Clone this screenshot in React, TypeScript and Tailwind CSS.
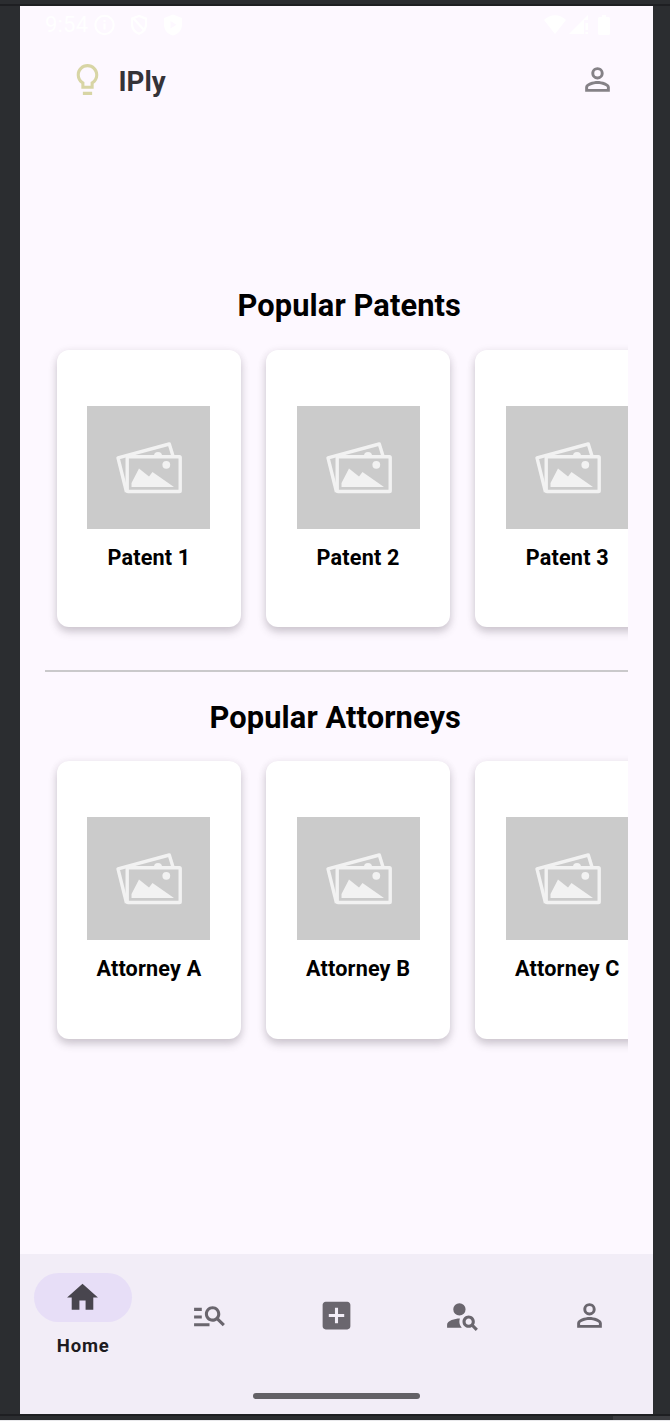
import React from "react";

const icons = {
  bulb: "M9 20h6v2H9zM12 2C8.14 2 5 5.14 5 9c0 2.38 1.19 4.47 3 5.74V18h8v-3.26c1.81-1.27 3-3.36 3-5.74 0-3.86-3.14-7-7-7zm2.85 11.1l-.85.6V16h-4v-2.3l-.85-.6C7.8 12.16 7 10.63 7 9c0-2.76 2.24-5 5-5s5 2.24 5 5c0 1.63-.8 3.16-2.15 4.1z",
  person:
    "M12 5.9a2.1 2.1 0 1 1 0 4.2 2.1 2.1 0 0 1 0-4.2m0 9c2.97 0 6.1 1.46 6.1 2.1v1.1H5.9V17c0-.64 3.13-2.1 6.1-2.1M12 4C9.79 4 8 5.79 8 8s1.79 4 4 4 4-1.79 4-4-1.79-4-4-4zm0 9c-2.67 0-8 1.34-8 4v3h16v-3c0-2.66-5.33-4-8-4z",
  home: "M10 20v-6h4v6h5v-8h3L12 3 2 12h3v8z",
  manageSearch:
    "M7 9H2V7h5v2zm0 3H2v2h5v-2zm13.59 7l-3.83-3.83c-.8.52-1.74.83-2.76.83-2.76 0-5-2.24-5-5s2.24-5 5-5 5 2.24 5 5c0 1.02-.31 1.96-.83 2.75L22 17.59 20.59 19zM17 11c0-1.65-1.35-3-3-3s-3 1.35-3 3 1.35 3 3 3 3-1.35 3-3zM2 19h10v-2H2v2z",
  addBox:
    "M19 3H5c-1.11 0-2 .9-2 2v14c0 1.1.89 2 2 2h14c1.1 0 2-.9 2-2V5c0-1.1-.9-2-2-2zm-2 10h-4v4h-2v-4H7v-2h4V7h2v4h4v2z",
  personSearch:
    "M10 4a4 4 0 1 0 0 8 4 4 0 0 0 0-8zM10.35 14.01C7.62 13.91 2 15.27 2 18v2h9.54c-2.47-2.76-1.23-5.89-1.19-5.99zM19.43 18.02c.36-.59.57-1.28.57-2.02 0-2.21-1.79-4-4-4s-4 1.79-4 4 1.79 4 4 4c.74 0 1.43-.22 2.02-.57L20.59 22 22 20.59l-2.57-2.57zM16 18c-1.1 0-2-.9-2-2s.9-2 2-2 2 .9 2 2-.9 2-2 2z",
};

function Icon({ name, className }: { name: keyof typeof icons; className: string }) {
  return (
    <svg viewBox="0 0 24 24" fill="currentColor" className={`block h-[37px] w-[37px] shrink-0 ${className}`}>
      <path d={icons[name]} />
    </svg>
  );
}

function StatusBar() {
  return (
    <div className="flex h-[37px] shrink-0 items-center pr-[43px] pl-[25px] text-white">
      <span className="w-[49px] text-[22px] leading-none tracking-[0.2px]">9:54</span>
      <svg viewBox="0 0 22 22" className="h-[22px] w-[22px]" fill="none" stroke="currentColor" strokeWidth="2">
        <circle cx="10.5" cy="11" r="9.2" />
        <path d="M10.5 9.5v6M10.5 6v2" />
      </svg>
      <svg viewBox="0 0 18 22" className="ml-[14px] h-[22px] w-[18px]" fill="none" stroke="currentColor" strokeWidth="2.2">
        <path d="M9 2 2 4.6v5.8c0 4.3 3 8.2 7 9.4 4-1.2 7-5.1 7-9.4V4.6L9 2zM3 4l12 13" />
      </svg>
      <svg viewBox="0 0 18 22" className="ml-[16px] h-[22px] w-[18px]" fill="currentColor" fillRule="evenodd">
        <path d="M9 .5 0 4v7c0 5 3.800 9.200 9 10.500 5.200-1.300 9-5.500 9-10.500V4zM6.500 7v7.500l6-3.700z" />
      </svg>
      <svg viewBox="0 0 22 20" className="ml-auto h-5 w-[22px]" fill="currentColor">
        <path d="M0 5C6-1.300 16-1.300 22 5L11 19z" />
      </svg>
      <svg viewBox="0 0 20 20" className="ml-[3px] h-5 w-5" fill="currentColor">
        <path d="M19 0v5h-4v14H0zM16.500 8H19v7h-2.500zM16.500 17H19v2h-2.500z" />
      </svg>
      <svg viewBox="0 0 12 20" className="ml-[9px] h-5 w-3" fill="currentColor">
        <path d="M4 0h4v2h2.500q1.500 0 1.500 1.500v15q0 1.500-1.500 1.500h-9Q0 20 0 18.500v-15Q0 2 1.500 2H4z" />
      </svg>
    </div>
  );
}

function Placeholder() {
  return (
    <div className="h-[123px] w-[123px] bg-[#cbcbcb]">
      <svg viewBox="0 0 123 123" className="block h-full w-full" fill="#f2f2f2">
        <path
          d="M39.500 86 31 51.800 82.300 38 86 50"
          fill="none"
          stroke="#f2f2f2"
          strokeWidth="3.400"
          strokeLinejoin="round"
        />
        <path d="M67 50a4 4 0 0 1 8 0z" />
        <rect x="40.200" y="50.800" width="53" height="34.700" rx="0.800" fill="#cbcbcb" stroke="#f2f2f2" strokeWidth="3.400" />
        <circle cx="79.300" cy="58.800" r="3.900" />
        <path d="M44.500 81V77L52 62.500 62 70.500 65.500 66 87 81z" />
      </svg>
    </div>
  );
}

function Card({ label }: { label: string }) {
  return (
    <div className="flex h-[277.500px] w-[184.600px] shrink-0 flex-col items-center rounded-[12px] bg-white pt-[56px] shadow-[0_5px_8px_rgba(60,50,62,0.22),0_1px_8px_rgba(60,45,65,0.08)]">
      <Placeholder />
      <span className="mt-[15px] text-[21.600px] leading-[28px] font-bold tracking-[0.180px] whitespace-nowrap text-black">{label}</span>
    </div>
  );
}

function Section({ title, items }: { title: string; items: string[] }) {
  return (
    <section className="flex flex-col">
      <h2 className="h-[36px] pr-[167px] text-right text-[30.800px] leading-[36px] font-bold tracking-[0.100px] whitespace-nowrap text-black">{title}</h2>
      <div className="mt-[13px] flex h-[308px] gap-[24.600px] overflow-hidden pt-[12.500px] pl-[11.600px]">
        {items.map((item) => (
          <Card key={item} label={item} />
        ))}
      </div>
    </section>
  );
}

const tabs: (keyof typeof icons)[] = ["manageSearch", "addBox", "personSearch", "person"];

export default function App() {
  return (
    <div className="flex h-[1421px] w-[670px] flex-col bg-[#2b2d30] font-['Roboto',sans-serif]">
      <div className="h-1 shrink-0" />
      <div className="h-0.5 shrink-0 bg-[#1e1f22]" />
      <div className="ml-5 flex h-[1408px] w-[633px] shrink-0 flex-col bg-[#fdf8ff]">
        <StatusBar />
        <header className="mt-[18px] flex h-[37px] shrink-0 items-center pr-[37px] pl-[49px]">
          <Icon name="bulb" className="text-[#d8d5a5]" />
          <h1 className="mt-[3px] ml-[12.500px] text-[27.700px] leading-[37px] font-bold text-[#353338]">IPly</h1>
          <Icon name="person" className="ml-auto text-[#858287]" />
        </header>
        <main className="ml-[25px] flex w-[583px] grow flex-col pt-[190px]">
          <Section title="Popular Patents" items={["Patent 1", "Patent 2", "Patent 3"]} />
          <div className="mt-[25px] mb-[27.600px] h-0.5 shrink-0 bg-[#cac9cb]" />
          <Section title="Popular Attorneys" items={["Attorney A", "Attorney B", "Attorney C"]} />
        </main>
        <nav className="flex h-[160px] shrink-0 flex-col bg-[#f2edf7]">
          <div className="grid h-[123px] grid-cols-5 pr-[0.500px]">
            <div className="flex flex-col items-center pt-[19px]">
              <div className="flex h-[49px] w-[98px] items-center justify-center rounded-full bg-[#e7def7]">
                <Icon name="home" className="mr-px text-[#48454e]" />
              </div>
              <span className="mt-[12px] text-[18.500px] leading-[24px] font-bold tracking-[0.850px] text-[#1d1b20]">Home</span>
            </div>
            {tabs.map((name) => (
              <div key={name} className="flex items-center justify-center text-[#6a666e]">
                <Icon name={name} className="" />
              </div>
            ))}
          </div>
          <div className="mx-auto mt-[16px] h-[6px] w-[167px] rounded-full bg-[#636166]" />
        </nav>
      </div>
      <div className="h-0.5 shrink-0 bg-[#1e1f22]" />
      <div className="flex h-1 shrink-0 justify-end">
        <div className="w-[57px] bg-[#3c3d41]" />
      </div>
      <div className="h-px shrink-0 bg-[#e9e9ec]" />
    </div>
  );
}
